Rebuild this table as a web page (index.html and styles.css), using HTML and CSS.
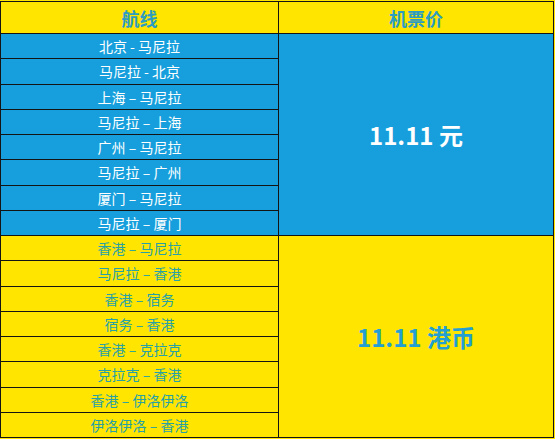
FILE: index.html
```html
<!DOCTYPE html>
<html lang="zh">
<head>
<meta charset="utf-8">
<link rel="stylesheet" href="styles.css">
</head>
<body>
<div class="table">
  <div class="head">航线</div>
  <div class="head">机票价</div>

  <div class="cell blue">北京 - 马尼拉</div>
  <div class="price price-blue">11.11 元</div>
  <div class="cell blue">马尼拉 - 北京</div>
  <div class="cell blue">上海 – 马尼拉</div>
  <div class="cell blue">马尼拉 – 上海</div>
  <div class="cell blue">广州 – 马尼拉</div>
  <div class="cell blue">马尼拉 – 广州</div>
  <div class="cell blue">厦门 – 马尼拉</div>
  <div class="cell blue">马尼拉 – 厦门</div>

  <div class="cell yellow">香港 – 马尼拉</div>
  <div class="price price-yellow">11.11 港币</div>
  <div class="cell yellow">马尼拉 – 香港</div>
  <div class="cell yellow">香港 – 宿务</div>
  <div class="cell yellow">宿务 – 香港</div>
  <div class="cell yellow">香港 – 克拉克</div>
  <div class="cell yellow">克拉克 – 香港</div>
  <div class="cell yellow">香港 – 伊洛伊洛</div>
  <div class="cell yellow">伊洛伊洛 – 香港</div>
</div>
</body>
</html>
```

FILE: styles.css
```css
html, body {
  margin: 0;
  padding: 0;
  background: #ffe500;
}
body {
  padding-top: 1px;
  font-family: "Noto Sans CJK SC", "Noto Sans", sans-serif;
}
.table {
  box-sizing: border-box;
  width: 554px;
  height: 437px;
  display: grid;
  grid-template-columns: 277px 274px;
  grid-template-rows: 31px repeat(16, 1fr);
  gap: 1px;
  padding: 1px;
  background: #141414;
}
.table > div {
  display: flex;
  align-items: center;
  justify-content: center;
  white-space: nowrap;
}
.head {
  background: #ffe500;
  color: #2b9cc2;
  font-weight: 700;
  font-size: 18px;
}
.cell {
  font-size: 14px;
  line-height: 1;
}
.blue {
  background: #169fdc;
  color: #ffffff;
}
.yellow {
  background: #ffe500;
  color: #27a1a6;
}
.price {
  grid-column: 2;
  font-size: 24px;
  font-weight: 700;
}
.price-blue {
  grid-row: 2 / span 8;
  background: #169fdc;
  color: #ffffff;
}
.price-yellow {
  grid-row: 10 / span 8;
  background: #ffe500;
  color: #239fd2;
}
```
